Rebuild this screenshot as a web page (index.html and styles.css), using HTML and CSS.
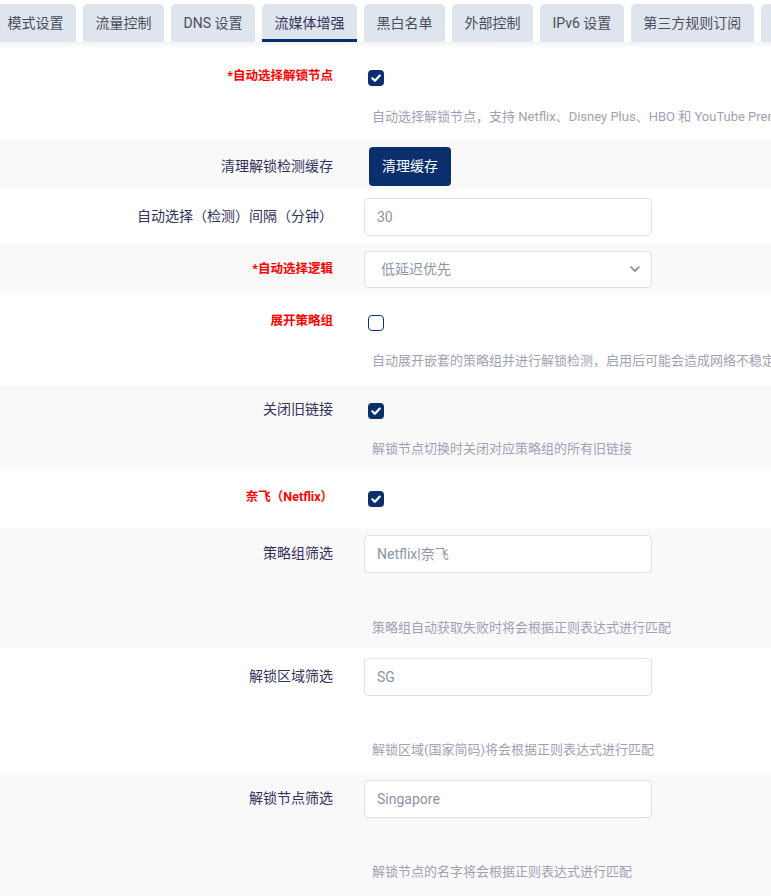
FILE: index.html
```html
<!DOCTYPE html>
<html lang="zh-CN">
<head>
<meta charset="utf-8">
<title>流媒体增强</title>
<link rel="stylesheet" href="styles.css">
</head>
<body>
<div class="tabs">
  <div class="tab">模式设置</div>
  <div class="tab">流量控制</div>
  <div class="tab">DNS 设置</div>
  <div class="tab active">流媒体增强</div>
  <div class="tab">黑白名单</div>
  <div class="tab">外部控制</div>
  <div class="tab">IPv6 设置</div>
  <div class="tab">第三方规则订阅</div>
  <div class="tab">调试日志</div>
</div>
<div class="tabs-shadow"></div>

<div class="rows">
  <div class="row pt10 pb14">
    <div class="line h38">
      <div class="label req">*自动选择解锁节点</div>
      <div class="control"><span class="cb on"><svg viewBox="0 0 16 16" width="16" height="16"><path d="M4.3 8.3 L6.9 10.8 L11.8 5.6" fill="none" stroke="#fff" stroke-width="2.2" stroke-linecap="round" stroke-linejoin="round"/></svg></span></div>
    </div>
    <div class="desc mt11">自动选择解锁节点，支持 Netflix、Disney Plus、HBO 和 YouTube Premium 等流媒体平台</div>
  </div>

  <div class="row alt pt6 pb3">
    <div class="line h39">
      <div class="label">清理解锁检测缓存</div>
      <div class="control"><button class="btn">清理缓存</button></div>
    </div>
  </div>

  <div class="row pt9 pb9">
    <div class="line h38">
      <div class="label">自动选择（检测）间隔（分钟）</div>
      <div class="control"><div class="input">30</div></div>
    </div>
  </div>

  <div class="row alt pt6 pb4">
    <div class="line h37">
      <div class="label req">*自动选择逻辑</div>
      <div class="control"><div class="select"><span>低延迟优先</span><svg viewBox="0 0 10 7" width="10" height="7"><path d="M1.2 1.3 L5 5 L8.8 1.3" fill="none" stroke="#8f9aab" stroke-width="2" stroke-linecap="round" stroke-linejoin="round"/></svg></div></div>
    </div>
  </div>

  <div class="row pt11 pb14">
    <div class="line h38">
      <div class="label req">展开策略组</div>
      <div class="control"><span class="cb"></span></div>
    </div>
    <div class="desc mt10">自动展开嵌套的策略组并进行解锁检测，启用后可能会造成网络不稳定，请谨慎开启</div>
  </div>

  <div class="row alt pt6 pb11">
    <div class="line h38">
      <div class="label">关闭旧链接</div>
      <div class="control"><span class="cb on"><svg viewBox="0 0 16 16" width="16" height="16"><path d="M4.3 8.3 L6.9 10.8 L11.8 5.6" fill="none" stroke="#fff" stroke-width="2.2" stroke-linecap="round" stroke-linejoin="round"/></svg></span></div>
    </div>
    <div class="desc mt10">解锁节点切换时关闭对应策略组的所有旧链接</div>
  </div>

  <div class="row pt9 pb11">
    <div class="line h38">
      <div class="label req">奈飞（Netflix）</div>
      <div class="control"><span class="cb on"><svg viewBox="0 0 16 16" width="16" height="16"><path d="M4.3 8.3 L6.9 10.8 L11.8 5.6" fill="none" stroke="#fff" stroke-width="2.2" stroke-linecap="round" stroke-linejoin="round"/></svg></span></div>
    </div>
  </div>

  <div class="row alt pt7 pb10">
    <div class="line h38">
      <div class="label">策略组筛选</div>
      <div class="control"><div class="input">Netflix|奈飞</div></div>
    </div>
    <div class="desc mt45">策略组自动获取失败时将会根据正则表达式进行匹配</div>
  </div>

  <div class="row pt10 pb15">
    <div class="line h38">
      <div class="label">解锁区域筛选</div>
      <div class="control"><div class="input">SG</div></div>
    </div>
    <div class="desc mt44">解锁区域(国家简码)将会根据正则表达式进行匹配</div>
  </div>

  <div class="row alt pt5 pb14">
    <div class="line h38">
      <div class="label">解锁节点筛选</div>
      <div class="control"><div class="input">Singapore</div></div>
    </div>
    <div class="desc mt44">解锁节点的名字将会根据正则表达式进行匹配</div>
  </div>
</div>
</body>
</html>
```

FILE: styles.css
```css
html, body {
  margin: 0;
  padding: 0;
  background: #ffffff;
}
body {
  width: 771px;
  overflow: hidden;
  font-family: Roboto, "Noto Sans CJK SC", sans-serif;
  color: #32325d;
}

/* tabs */
.tabs {
  display: flex;
  gap: 7px;
  padding-top: 4px;
  margin-left: -5px;
  white-space: nowrap;
  overflow: hidden;
  width: 790px;
}
.tab {
  flex-shrink: 0;
  height: 38px;
  line-height: 38px;
  padding: 0 12.5px;
  background: #dfe5ec;
  border-radius: 5px 5px 0 0;
  font-size: 14px;
  color: #4a4f5e;
  box-sizing: border-box;
}
.tab.active {
  color: #32325d;
  box-shadow: inset 0 -3px 0 #0b2f6d;
}
.tabs-shadow {
  height: 6px;
  background: linear-gradient(#f0f2f5, #ffffff);
}

/* rows */
.row {
  background: #ffffff;
}
.row.alt {
  background: #f9f9fa;
}
.line {
  display: flex;
  align-items: center;
}
.h37 { height: 37px; }
.h38 { height: 38px; }
.h39 { height: 39px; }

.pt5 { padding-top: 5px; }
.pt6 { padding-top: 6px; }
.pt7 { padding-top: 7px; }
.pt9 { padding-top: 9px; }
.pt10 { padding-top: 10px; }
.pt11 { padding-top: 11px; }
.pb3 { padding-bottom: 3px; }
.pb4 { padding-bottom: 4px; }
.pb9 { padding-bottom: 9px; }
.pb10 { padding-bottom: 10px; }
.pb11 { padding-bottom: 11px; }
.pb14 { padding-bottom: 14px; }
.pb15 { padding-bottom: 15px; }
.mt10 { margin-top: 10px; }
.mt11 { margin-top: 11px; }
.mt44 { margin-top: 44px; }
.mt45 { margin-top: 45px; }

.label {
  width: 333px;
  flex-shrink: 0;
  text-align: right;
  font-size: 14px;
  line-height: 20px;
  color: #32325d;
  padding-bottom: 2px;
  white-space: nowrap;
}
.label.req {
  color: #ff0000;
  font-weight: 700;
  font-size: 12.5px;
}
.control {
  margin-left: 31px;
  display: flex;
  align-items: center;
}

/* checkbox */
.cb {
  display: block;
  width: 16px;
  height: 16px;
  margin-left: 4px;
  box-sizing: border-box;
  border: 1px solid #0b2f6d;
  border-radius: 4px;
  background: #ffffff;
  margin-top: 1px;
}
.cb.on {
  background: #0b2f6d;
  border: none;
}
.cb svg {
  display: block;
}

/* button */
.btn {
  margin-left: 5px;
  height: 39px;
  padding: 0 13px;
  border: none;
  border-radius: 4px;
  background: #0b2f6d;
  color: #ffffff;
  font-family: Roboto, "Noto Sans CJK SC", sans-serif;
  font-size: 14px;
  line-height: 39px;
}

/* inputs */
.input, .select {
  width: 288px;
  height: 38px;
  box-sizing: border-box;
  border: 1px solid #dfe2e8;
  border-radius: 4px;
  background: #ffffff;
  font-size: 14px;
  color: #8a94a6;
  line-height: 36px;
  padding: 0 12px;
  white-space: nowrap;
}
.select {
  height: 37px;
  line-height: 35px;
  padding: 0 11px 0 16px;
  display: flex;
  justify-content: space-between;
  align-items: center;
}

/* description */
.desc {
  margin-left: 372px;
  font-size: 13px;
  line-height: 20px;
  color: #9fa2b3;
  white-space: nowrap;
}
```
